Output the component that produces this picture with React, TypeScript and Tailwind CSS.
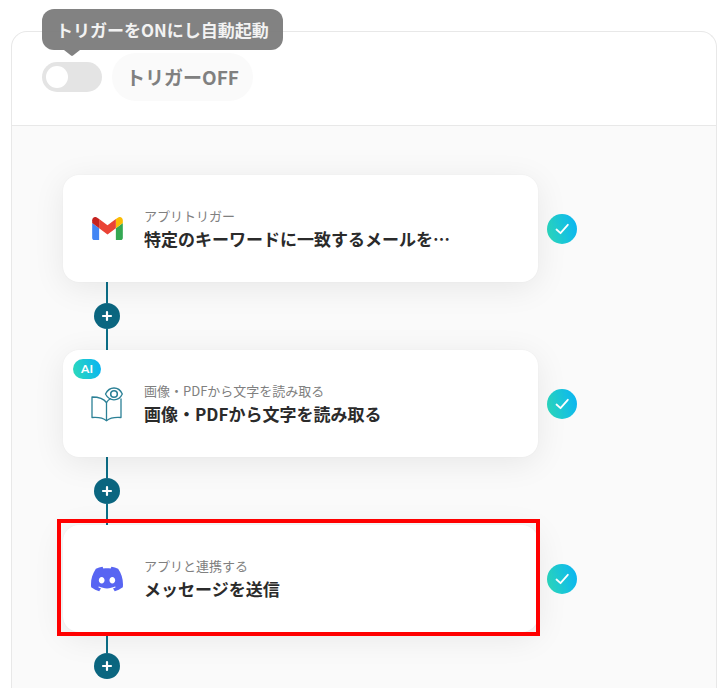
import React, { useState } from "react";
import { SiDiscord } from "react-icons/si";

type Step = {
  id: string;
  label: string;
  title: string;
  icon: React.ReactNode;
  ai?: boolean;
  highlighted?: boolean;
};

const GmailIcon = () => (
  <svg width="31" height="23" viewBox="52 42 88 66" aria-hidden="true">
    <path fill="#4285f4" d="M58 108h14V74L52 59v43c0 3.32 2.69 6 6 6" />
    <path fill="#34a853" d="M120 108h14c3.32 0 6-2.69 6-6V59l-20 15" />
    <path fill="#fbbc04" d="M120 48v26l20-15v-8c0-7.42-8.47-11.65-14.4-7.2" />
    <path fill="#ea4335" d="M72 74V48l24 18 24-18v26L96 92" />
    <path fill="#c5221f" d="M52 51v8l20 15V48l-5.6-4.2c-5.94-4.45-14.4-.22-14.4 7.2" />
  </svg>
);

const BookEyeIcon = () => (
  <svg width="32" height="36" viewBox="0 0 32 36" fill="none" stroke="#2b8096" strokeWidth="1.3" strokeLinejoin="round" strokeLinecap="round" aria-hidden="true">
    <path d="M15.5 16.5C13 13 8 11 1 11v20.5c6-.5 11 .3 14.5 3.2 3.5-2.9 8.5-3.7 14.500-3.2V13" />
    <path d="M15.5 16.5v18" />
    <path d="M15.5 16.5c1-1.7 2.2-2.9 3.8-3.8" />
    <path d="M14.5 8C16.5 4 19.5 2 23 2s6.5 2 8.3 6c-1.8 4-4.8 5.8-8.3 5.800S16.5 12 14.5 8z" />
    <circle cx="23" cy="8" r="3.3" strokeWidth="1.6" />
  </svg>
);

const steps: Step[] = [
  {
    id: "gmail",
    label: "アプリトリガー",
    title: "特定のキーワードに一致するメールを…",
    icon: <GmailIcon />,
  },
  {
    id: "ocr",
    label: "画像・PDFから文字を読み取る",
    title: "画像・PDFから文字を読み取る",
    icon: <BookEyeIcon />,
    ai: true,
  },
  {
    id: "discord",
    label: "アプリと連携する",
    title: "メッセージを送信",
    icon: <SiDiscord size={32} color="#5865f2" aria-hidden="true" />,
    highlighted: true,
  },
];

const DoneBadge = () => (
  <span className="flex size-[30px] shrink-0 items-center justify-center rounded-full bg-linear-[75deg] from-[#2edbb9] to-[#08b2f5]">
    <svg width="16" height="14" viewBox="0 0 16 14" fill="none" stroke="#fff" strokeWidth="1.8" strokeLinecap="round" strokeLinejoin="round" aria-hidden="true">
      <path d="M2.5 7.5L6.5 11.2 13.8 2.8" />
    </svg>
  </span>
);

const StepCard: React.FC<{ step: Step }> = ({ step }) => (
  <div className="flex items-center gap-[9px]">
    <div className="relative flex h-[107px] w-full max-w-[475px] items-center gap-[21px] rounded-2xl bg-white pl-7 shadow-[0_0_2px_rgba(0,0,0,0.04),0_6px_32px_rgba(0,0,0,0.08)]">
      {step.ai && (
        <span className="absolute top-[9px] left-[10px] flex h-5 w-7 items-center justify-center rounded-full bg-linear-[75deg] from-[#2edbb9] to-[#08b2f5] font-['Lato',sans-serif] text-xs font-bold text-white">
          AI
        </span>
      )}
      <span className="flex w-8 shrink-0 justify-center">{step.icon}</span>
      <div className="min-w-0">
        <p className="truncate text-[13px] leading-5 text-[#808080]">{step.label}</p>
        <h2 className="truncate text-[17px] leading-[26px] font-bold text-[#2b2b2b]">{step.title}</h2>
      </div>
      {step.highlighted && (
        <span className="pointer-events-none absolute -top-1.5 -right-0.5 -bottom-1 -left-1.5 border-4 border-[#ff0000]" />
      )}
    </div>
    <DoneBadge />
  </div>
);

const Connector: React.FC<{ last: boolean }> = ({ last }) => (
  <div className="ml-[31px] flex h-[68px] w-[26px] flex-col items-center">
    <span className="w-0.5 flex-1 bg-[#0b6e87]" />
    <button type="button" aria-label="追加" className="flex size-[26px] shrink-0 items-center justify-center rounded-full bg-[#0b6680]">
      <svg width="12" height="12" viewBox="0 0 12 12" stroke="#fff" strokeWidth="2.2" strokeLinecap="round" aria-hidden="true">
        <path d="M6 2v8M2 6h8" />
      </svg>
    </button>
    <span className={last ? "w-0.5 flex-1" : "w-0.5 flex-1 bg-[#0b6e87]"} />
  </div>
);

const App: React.FC = () => {
  const [enabled, setEnabled] = useState(false);

  return (
    <div
      lang="ja"
      className="flex min-h-screen flex-col bg-white pt-[31px] pr-[9px] pl-[11px] font-['Noto_Sans_CJK_JP','Noto_Sans',sans-serif]"
    >
      <main className="flex flex-1 flex-col rounded-t-2xl border border-b-0 border-[#e8e8e8]">
        <header className="flex items-center gap-[10px] border-b border-[#e8e8e8] pt-[21px] pb-6 pl-[30px]">
          <div className="relative">
            <button
              type="button"
              role="switch"
              aria-checked={enabled}
              aria-labelledby="trigger-label"
              onClick={() => setEnabled(!enabled)}
              className={`flex h-[30px] w-[60px] items-center rounded-full px-1 ${enabled ? "justify-end bg-[#1cc8d6]" : "bg-[#e4e4e4]"}`}
            >
              <span className="size-[22px] rounded-full bg-white" />
            </button>
            {/* Tooltip */}
            <div className="absolute bottom-full left-0 mb-3 rounded-xl bg-[#7b7b7b]/95 px-[14px] py-2 text-[17px] leading-[25px] font-bold whitespace-nowrap text-[#f2f2f2]">
              トリガーをONにし自動起動
              <svg className="absolute top-full left-[22px]" width="16" height="6" viewBox="0 0 16 6" aria-hidden="true">
                <path d="M0 0h16L9 5.5q-1 .8-2 0z" fill="#7b7b7b" fillOpacity="0.95" />
              </svg>
            </div>
          </div>
          <span id="trigger-label" className="rounded-full bg-[#fafafa] px-[14px] text-[19px] leading-[48px] font-bold text-[#808080]">
            トリガー{enabled ? "ON" : "OFF"}
          </span>
        </header>
        <section className="flex-1 bg-[#fafafa] pt-[49px] pl-[51px]">
          {steps.map((step, i) => (
            <div key={step.id}>
              <StepCard step={step} />
              <Connector last={i === steps.length - 1} />
            </div>
          ))}
        </section>
      </main>
    </div>
  );
};

export default App;
